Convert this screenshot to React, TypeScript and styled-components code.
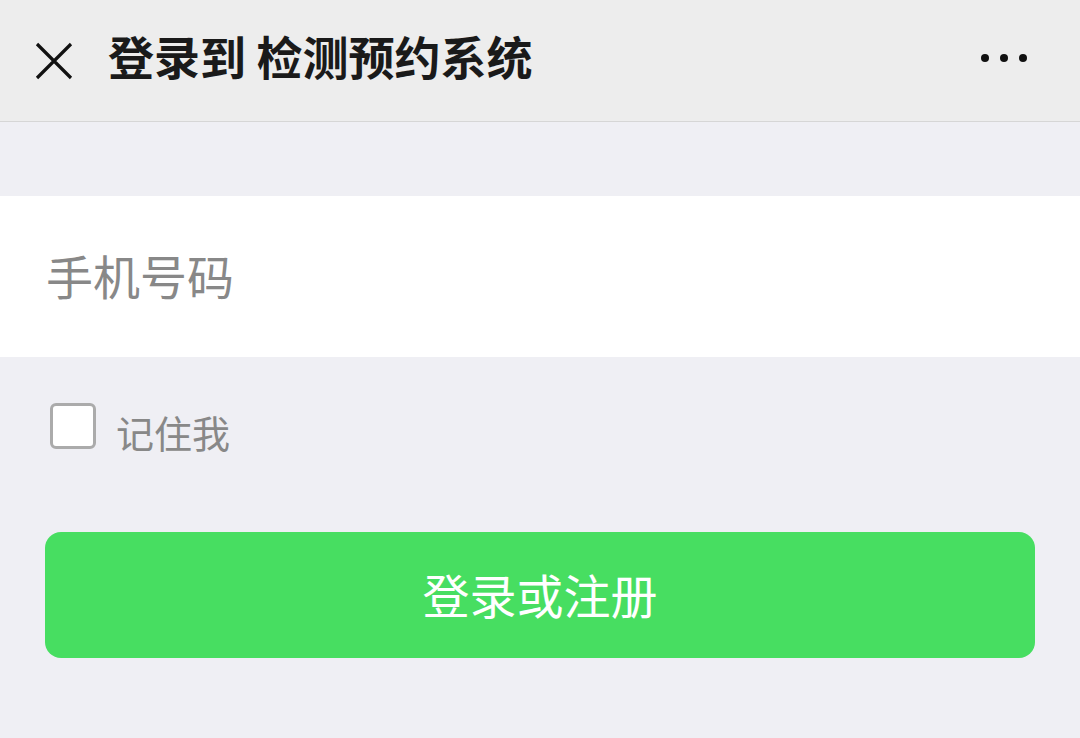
import styled, { createGlobalStyle } from "styled-components";

const GlobalStyle = createGlobalStyle`
  html, body {
    margin: 0;
    padding: 0;
    background: #efeff4;
    font-family: "Noto Sans CJK SC", "Noto Sans", sans-serif;
  }
`;

const Page = styled.div`
  width: 1080px;
  height: 738px;
  background: #efeff4;
  overflow: hidden;
`;

const NavBar = styled.div`
  height: 121px;
  background: #ededed;
  border-bottom: 1px solid #d6d6d6;
  display: flex;
  align-items: center;
  padding: 0 34px 0 34px;
  box-sizing: content-box;
`;

const CloseButton = styled.button`
  width: 40px;
  height: 40px;
  padding: 0;
  border: none;
  background: none;
  display: flex;
  align-items: center;
  justify-content: center;
  margin-right: 34px;
`;

const Title = styled.h1`
  flex: 1;
  margin: 0;
  font-size: 46px;
  font-weight: 700;
  color: #1a1a1a;
  line-height: 1;
  margin-top: -12px;
`;

const MoreButton = styled.div`
  display: flex;
  gap: 11px;
  margin-right: 19px;
  margin-top: -6px;
`;

const Dot = styled.span`
  width: 8px;
  height: 8px;
  border-radius: 50%;
  background: #111;
`;

const Spacer = styled.div<{ $h: number }>`
  height: ${(p) => p.$h}px;
`;

const InputRow = styled.div`
  height: 161px;
  background: #fff;
  display: flex;
  align-items: center;
  padding: 0 46px;
`;

const Input = styled.input`
  flex: 1;
  border: none;
  outline: none;
  background: transparent;
  font-family: inherit;
  font-size: 47px;
  color: #333;
  padding: 0;
  margin-top: -4px;

  &::placeholder {
    color: #888;
  }
`;

const RememberRow = styled.label`
  display: flex;
  align-items: center;
  padding: 47px 0 0 50px;
`;

const Box = styled.span`
  width: 40px;
  height: 40px;
  border: 3px solid #ababab;
  border-radius: 6px;
  background: #fff;
  margin-top: -12px;
  margin-right: 20px;
`;

const RememberText = styled.span`
  font-size: 38px;
  color: #888;
`;

const SubmitButton = styled.button`
  display: block;
  margin: 73px 45px 0 45px;
  width: 990px;
  height: 126px;
  border: none;
  border-radius: 16px;
  background: #47de61;
  color: #fff;
  font-family: inherit;
  font-size: 47px;
  padding: 0;
  padding-bottom: 4px;
`;

export default function App() {
  return (
    <Page>
      <GlobalStyle />
      <NavBar>
        <CloseButton aria-label="close">
          <svg width="40" height="40" viewBox="0 0 40 40">
            <path d="M3 3 L37 37 M37 3 L3 37" stroke="#111" strokeWidth="3.2" fill="none" />
          </svg>
        </CloseButton>
        <Title>登录到 检测预约系统</Title>
        <MoreButton>
          <Dot />
          <Dot />
          <Dot />
        </MoreButton>
      </NavBar>
      <Spacer $h={74} />
      <InputRow>
        <Input placeholder="手机号码" />
      </InputRow>
      <RememberRow>
        <Box />
        <RememberText>记住我</RememberText>
      </RememberRow>
      <SubmitButton>登录或注册</SubmitButton>
    </Page>
  );
}
